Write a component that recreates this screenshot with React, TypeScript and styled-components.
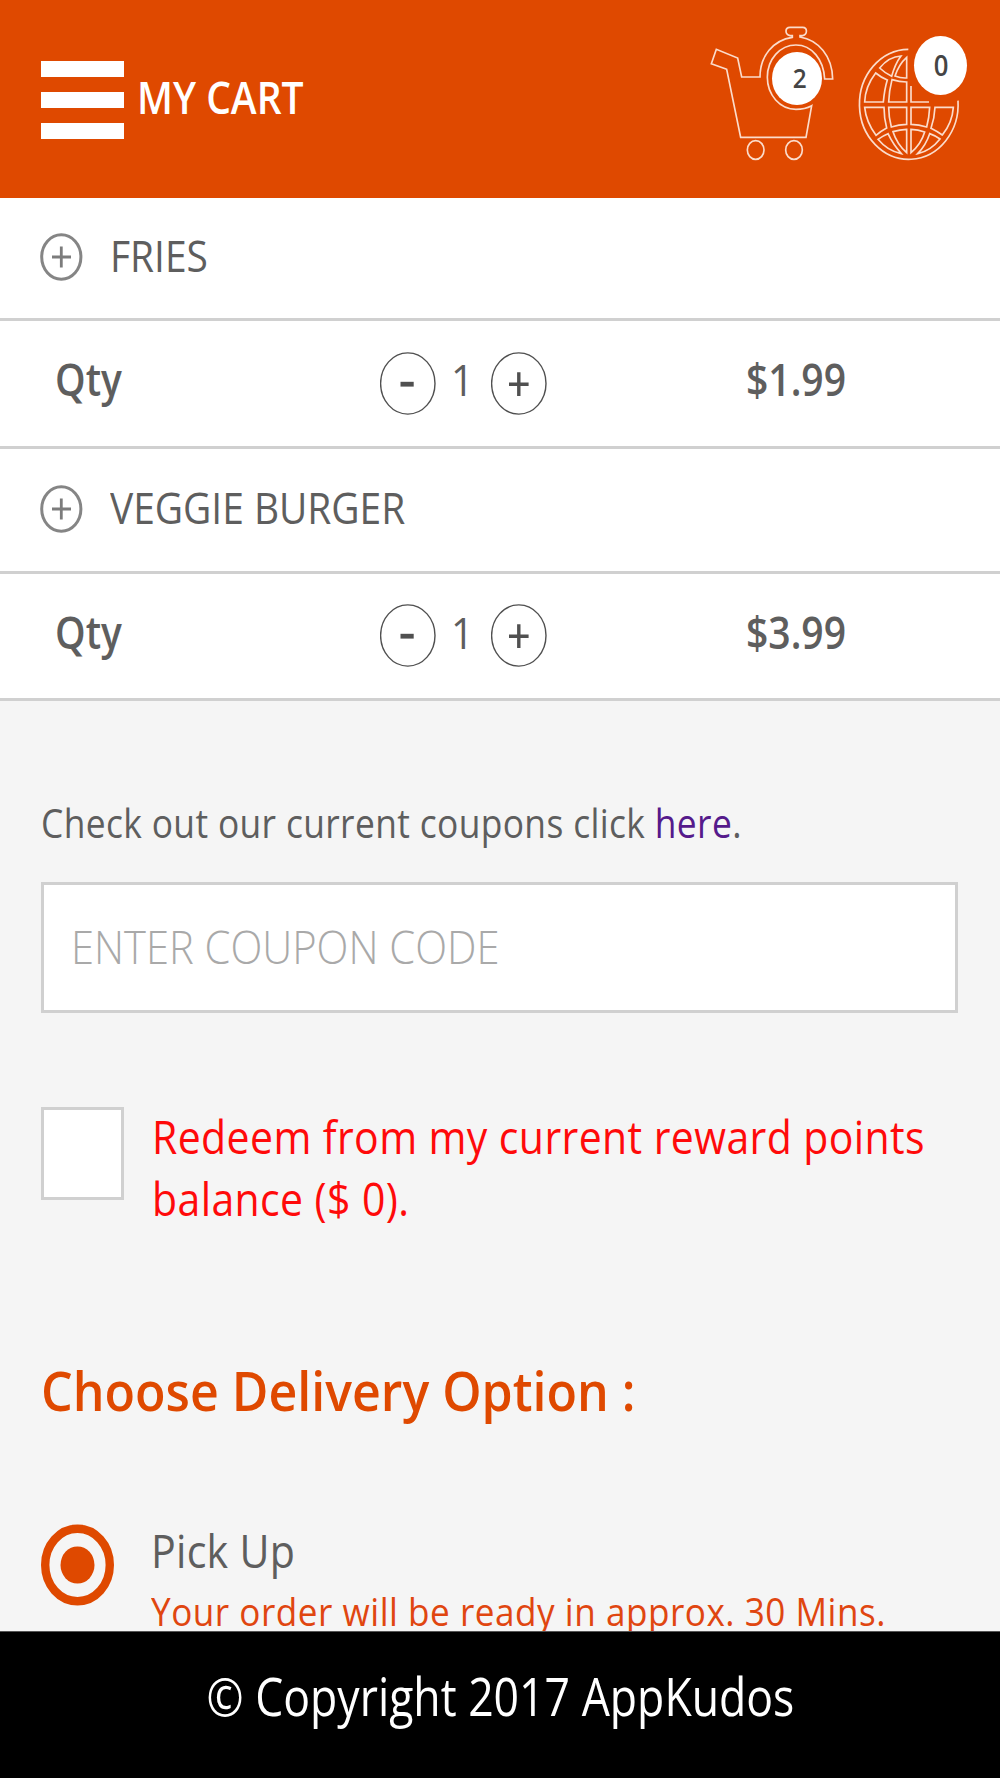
import React from "react";
import styled, { createGlobalStyle } from "styled-components";

const ORANGE = "#df4900";
const GREY_TEXT = "#5e5e5e";
const LINE = "#d0d0d0";

const Global = createGlobalStyle`
  *, *::before, *::after { box-sizing: border-box; }
  body {
    margin: 0;
    background: #f5f5f5;
    font-family: "Open Sans", "Noto Sans", sans-serif;
  }
`;

const Screen = styled.div`
  width: 1000px;
  height: 1778px;
  display: flex;
  flex-direction: column;
  overflow: hidden;
  background: #f5f5f5;
  color: ${GREY_TEXT};
`;

/* Condensed text: glyphs are narrowed from their left edge. */
const Label = styled.span<{
  $size: number;
  $condense?: number;
  $weight?: number;
  $track?: number;
  $line?: number;
  $color?: string;
}>`
  display: block;
  white-space: nowrap;
  font-size: ${(p) => p.$size}px;
  font-weight: ${(p) => p.$weight ?? 400};
  letter-spacing: ${(p) => p.$track ?? 0}px;
  line-height: ${(p) => p.$line ?? 60}px;
  color: ${(p) => p.$color ?? "inherit"};
  transform: scaleX(${(p) => p.$condense ?? 0.9});
  transform-origin: left center;
`;

const Header = styled.header`
  flex: none;
  display: flex;
  align-items: flex-start;
  height: 198px;
  padding-left: 40.5px;
  background: ${ORANGE};
  color: #fff;
`;

const MenuButton = styled.button`
  display: flex;
  flex-direction: column;
  gap: 15px;
  width: 83.5px;
  margin: 60.6px 12.5px 0 0;
  padding: 0;
  border: 0;
  background: none;
`;

const MenuBar = styled.span`
  height: 16px;
  background: #fff;
`;

const TitleWrap = styled.h1`
  flex: 1;
  margin: 67px 0 0;
`;

const IconSlot = styled.div<{ $width: number; $top: number; $right: number }>`
  position: relative;
  width: ${(p) => p.$width}px;
  margin: ${(p) => p.$top}px ${(p) => p.$right}px 0 0;

  svg {
    display: block;
    width: 100%;
    fill: none;
    stroke: #fbdccb;
    stroke-width: 5;
    stroke-linejoin: miter;
  }
`;

const Badge = styled.span<{ $x: number; $y: number; $w: number; $h: number; $size: number; $shift: number }>`
  position: absolute;
  left: ${(p) => p.$x}px;
  top: ${(p) => p.$y}px;
  width: ${(p) => p.$w}px;
  height: ${(p) => p.$h}px;
  display: flex;
  align-items: center;
  justify-content: center;
  padding-left: ${(p) => p.$shift}px;
  padding-bottom: 1px;
  border-radius: 50%;
  background: #fff;
  color: #454545;
  font-size: ${(p) => p.$size}px;
  font-weight: 600;
  line-height: 1;
`;

const BadgeDigit = styled.span`
  transform: scaleX(0.9);
`;

const Main = styled.main`
  flex: 1;
  min-height: 0;
  overflow: hidden;
`;

const ItemRow = styled.div<{ $height: number }>`
  display: flex;
  align-items: center;
  height: ${(p) => p.$height}px;
  padding-left: 40px;
  border-bottom: 3px solid ${LINE};
  background: #fff;
`;

const ExpandIcon = styled.svg`
  width: 43px;
  height: 48px;
  margin: 0 27.3px 2px 0;
  fill: none;
`;

const ItemName = styled.div`
  margin-bottom: 5px;
`;

const QtyRow = styled.div<{ $height: number }>`
  display: grid;
  grid-template-columns: 325.5px 71px 40px 254.5px 1fr;
  align-items: center;
  height: ${(p) => p.$height}px;
  padding-left: 54.5px;
  border-bottom: 3px solid ${LINE};
  background: #fff;
`;

const QtyCell = styled.div<{ $lift: number }>`
  margin-bottom: ${(p) => p.$lift}px;
`;

const RoundButton = styled.button`
  width: 56px;
  height: 63px;
  margin-bottom: 1px;
  padding: 0;
  border: 0;
  background: none;

  svg {
    display: block;
    width: 56px;
    height: 63px;
    fill: none;
    stroke: #505050;
  }
`;

const Form = styled.section`
  padding: 92px 42px 0 41px;
`;

const CouponLink = styled.a`
  color: #551a8b;
  text-decoration: none;
`;

const CouponBox = styled.div`
  height: 131px;
  margin-top: 29px;
  padding: 0 26px 0 27px;
  border: 3px solid ${LINE};
  background: #fff;
`;

const CouponInput = styled.input`
  width: 100%;
  height: 122px;
  padding: 0;
  border: 0;
  outline: 0;
  background: transparent;
  font: 300 45.8px "Open Sans", sans-serif;
  color: ${GREY_TEXT};
  transform: scaleX(0.91);
  transform-origin: left center;

  &::placeholder {
    color: #a9a9a9;
    opacity: 1;
  }
`;

const RewardRow = styled.label`
  display: flex;
  align-items: flex-start;
  gap: 27.5px;
  margin-top: 91.5px;
`;

const Checkbox = styled.input`
  appearance: none;
  flex: none;
  width: 83px;
  height: 93px;
  margin: 2px 0 0;
  border: 3px solid ${LINE};
  background: #fff;
`;

const Heading = styled.h2`
  margin: 126px 0 0;
`;

const OptionRow = styled.label`
  display: flex;
  align-items: flex-start;
  margin-top: 94.5px;
`;

const RadioIcon = styled.svg`
  flex: none;
  width: 73px;
  height: 82px;
  margin: 4px 37.3px 0 -0.5px;
`;

const OptionText = styled.div`
  display: flex;
  flex-direction: column;
  gap: 6px;
`;

const OptionNote = styled.div`
  margin-left: 0.7px;
`;

const Footer = styled.footer`
  flex: none;
  display: flex;
  justify-content: center;
  height: 147px;
  padding-top: 29px;
  border-top: 1px solid #555;
  background: #000;
  color: #fff;

  ${Label} {
    transform-origin: center;
  }
`;

function CartIcon() {
  return (
    <svg viewBox="45 60 405 440">
      <path d="M110 208 L64 191 L79 148 L143 174 L155 231 H210 C210 168 250 120 307 112 L307 107 H300 C284 104 284 82 300 82 H338 C353 82 353 104 338 107 H330 L330 111 C385 120 427 168 428 237 H404 C401 178 365 135 318 135 C270 135 232 178 232 232 C232 285 270 328 318 328 C336 328 352 324 365 317 L348 412 H152 Z" />
      <ellipse cx="197" cy="450" rx="25" ry="28" />
      <ellipse cx="312" cy="450" rx="25" ry="28" />
    </svg>
  );
}

function GlobeIcon() {
  return (
    <svg viewBox="493 60 345 440">
      <path d="M653 148 A148 165 0 1 0 802 302" />
      <path d="M567 204 C585 182 608 169 631 168 C618 185 609 207 603 229 Q584 220 567 204 Z" />
      <path d="M648 172 C631 187 620 207 613 228 Q630 235 648 234 Z" />
      <path d="M555 219 Q572 233 590 240 C583 262 580 284 578 306 H522 C523 275 535 245 555 219 Z" />
      <path d="M604 239 Q626 246 648 246 V306 H594 C595 284 598 262 604 239 Z" />
      <path d="M661 258 V306 H715" />
      <path d="M522 322 H580 C580 345 583 365 588 384 Q571 393 556 406 C537 380 525 352 522 322 Z" />
      <path d="M594 322 H648 V373 Q624 374 602 381 C597 362 594 342 594 322 Z" />
      <path d="M661 322 H717 C716 343 713 363 708 381 Q685 374 661 373 Z" />
      <path d="M733 322 H788 C786 352 775 380 755 405 Q739 394 721 385 C728 365 732 345 733 322 Z" />
      <path d="M562 418 Q577 407 592 401 C602 422 615 442 632 461 C605 456 580 440 562 418 Z" />
      <path d="M607 395 Q628 389 648 388 V458 C630 442 615 420 607 395 Z" />
      <path d="M661 388 Q682 389 702 396 C695 420 681 441 661 458 Z" />
      <path d="M717 401 Q734 407 748 417 C730 440 708 455 681 461 C698 443 710 423 717 401 Z" />
    </svg>
  );
}

function PlusRing() {
  return (
    <ExpandIcon viewBox="0 0 43 48">
      <ellipse cx="21.3" cy="24" rx="19.6" ry="22.2" stroke="#858585" strokeWidth="3" />
      <path d="M12 24 H31 M21.3 13.5 V34.5" stroke="#7c7c7c" strokeWidth="2.8" />
    </ExpandIcon>
  );
}

function StepButton({ kind }: { kind: "minus" | "plus" }) {
  return (
    <RoundButton aria-label={kind}>
      <svg viewBox="0 0 56 63">
        <ellipse cx="27.8" cy="31.5" rx="27.2" ry="30.6" strokeWidth="1.4" />
        {kind === "minus" ? (
          <path d="M20.5 32.2 H33.7" strokeWidth="4.8" />
        ) : (
          <path d="M18 32.2 H37.6 M27.8 20.3 V44" strokeWidth="3.4" />
        )}
      </svg>
    </RoundButton>
  );
}

const cart = [
  { name: "FRIES", qty: 1, price: "$1.99", nameHeight: 123, qtyHeight: 128 },
  { name: "VEGGIE BURGER", qty: 1, price: "$3.99", nameHeight: 125, qtyHeight: 127 },
];

export default function App() {
  return (
    <Screen>
      <Global />
      <Header>
        <MenuButton aria-label="Menu">
          <MenuBar />
          <MenuBar />
          <MenuBar />
        </MenuButton>
        <TitleWrap>
          <Label $size={45.3} $weight={600} $condense={0.861}>MY CART</Label>
        </TitleWrap>
        <IconSlot $width={135} $top={20} $right={15}>
          <CartIcon />
          <Badge $x={66.7} $y={31.7} $w={50} $h={53.3} $size={27} $shift={6}>
            <BadgeDigit>2</BadgeDigit>
          </Badge>
        </IconSlot>
        <IconSlot $width={115} $top={20} $right={30}>
          <GlobeIcon />
          <Badge $x={59} $y={16} $w={53} $h={59.3} $size={28.5} $shift={2}>
            <BadgeDigit>0</BadgeDigit>
          </Badge>
        </IconSlot>
      </Header>

      <Main>
        {cart.map((item) => (
          <React.Fragment key={item.name}>
            <ItemRow $height={item.nameHeight}>
              <PlusRing />
              <ItemName>
                <Label $size={43.3} $condense={0.898}>{item.name}</Label>
              </ItemName>
            </ItemRow>
            <QtyRow $height={item.qtyHeight}>
              <QtyCell $lift={9}>
                <Label $size={45} $weight={600} $condense={0.865}>Qty</Label>
              </QtyCell>
              <StepButton kind="minus" />
              <QtyCell $lift={9}>
                <Label $size={44}>{item.qty}</Label>
              </QtyCell>
              <StepButton kind="plus" />
              <QtyCell $lift={9}>
                <Label $size={45} $weight={600} $condense={0.868}>{item.price}</Label>
              </QtyCell>
            </QtyRow>
          </React.Fragment>
        ))}

        <Form>
          <Label $size={39.3} $track={0.4}>
            Check out our current coupons click <CouponLink href="#">here</CouponLink>.
          </Label>
          <CouponBox>
            <CouponInput placeholder="ENTER COUPON CODE" />
          </CouponBox>
          <RewardRow>
            <Checkbox type="checkbox" />
            <Label $size={45.5} $track={0.46} $line={62.3} $color="#ff0a0a">
              Redeem from my current reward points
              <br />
              balance ($ 0).
            </Label>
          </RewardRow>
          <Heading>
            <Label $size={55} $weight={600} $condense={0.91} $line={70} $color={ORANGE}>
              Choose Delivery Option :
            </Label>
          </Heading>
          <OptionRow>
            <RadioIcon viewBox="0 0 73 82">
              <ellipse cx="36.5" cy="41" rx="32.3" ry="36.2" fill="none" stroke={ORANGE} strokeWidth="8.4" />
              <ellipse cx="36.5" cy="41" rx="17" ry="18.6" fill={ORANGE} />
            </RadioIcon>
            <OptionText>
              <Label $size={45.7} $track={0.3}>Pick Up</Label>
              <OptionNote>
                <Label $size={39} $track={0.58} $line={50} $color="#e04610">
                  Your order will be ready in approx. 30 Mins.
                </Label>
              </OptionNote>
            </OptionText>
          </OptionRow>
        </Form>
      </Main>

      <Footer>
        <Label $size={52.7} $condense={0.846} $line={70}>© Copyright 2017 AppKudos</Label>
      </Footer>
    </Screen>
  );
}
